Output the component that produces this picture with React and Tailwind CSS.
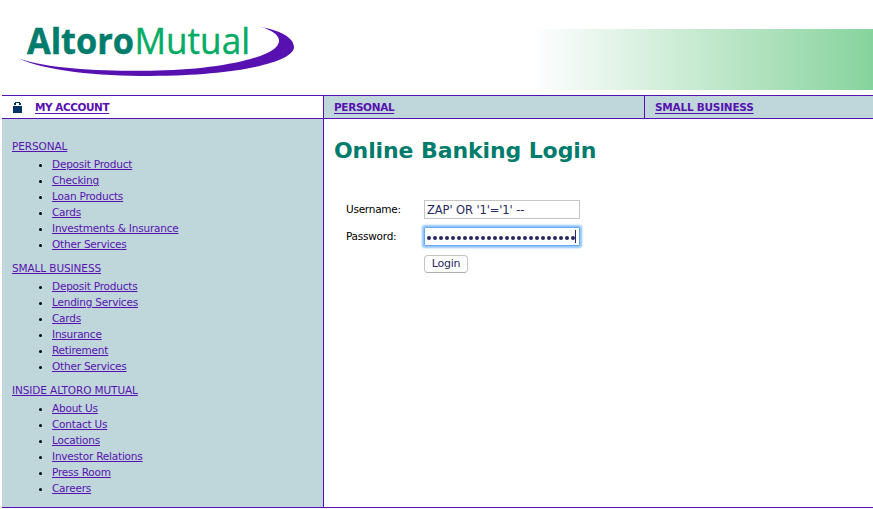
const sections = [
  {
    title: 'PERSONAL',
    items: ['Deposit Product', 'Checking', 'Loan Products', 'Cards', 'Investments & Insurance', 'Other Services'],
  },
  {
    title: 'SMALL BUSINESS',
    items: ['Deposit Products', 'Lending Services', 'Cards', 'Insurance', 'Retirement', 'Other Services'],
  },
  {
    title: 'INSIDE ALTORO MUTUAL',
    items: ['About Us', 'Contact Us', 'Locations', 'Investor Relations', 'Press Room', 'Careers'],
  },
];

function Logo() {
  return (
    <svg className="ml-3 mt-2.5 h-[70px] w-[290px] shrink-0" viewBox="12 10 290 70">
      <path
        d="M18 58.2 C50 69 100 71.2 150 70.8 C205 70.5 257 61.5 274 49 C284 41 279 32 260 26.8 C279 30 294 37.5 294 47 C294 62 237 75.8 151 75.9 C96 75.9 47 71 18 58.2Z"
        fill="#5811b1"
      />
      <text x="27" y="53.5" textLength="107" lengthAdjust="spacingAndGlyphs" fontFamily="'Open Sans', 'Noto Sans', sans-serif" fontSize="36" fontWeight="700" fill="#007c6c" stroke="#007c6c" strokeWidth="0.5">Altoro</text>
      <text x="134.5" y="53.5" textLength="115.5" lengthAdjust="spacingAndGlyphs" fontFamily="'Open Sans', 'Noto Sans', sans-serif" fontSize="36" fontWeight="400" fill="#00ab63" stroke="#00ab63" strokeWidth="0.4">Mutual</text>
    </svg>
  );
}

function Lock() {
  return (
    <svg className="h-3 w-[9px]" viewBox="0 0 9 12" shapeRendering="crispEdges" fill="#003366">
      <path d="M2 1h5v1h1v2H6V2H3v2H1V2h1z M0 5h9v7H0z" />
    </svg>
  );
}

function NavLink({ children, className }) {
  return (
    <a className={`text-[10.5px] leading-[22px] font-bold underline decoration-1 underline-offset-2 ${className}`}>{children}</a>
  );
}

export default function App() {
  return (
    <div className="flex h-[509px] w-[873px] flex-col overflow-hidden bg-white pl-0.5 font-['DejaVu_Sans',sans-serif] text-[#5811b1]">
      <header className="-ml-0.5 flex h-[95px] shrink-0 justify-between">
        <Logo />
        <div className="mt-[29px] h-[61px] w-[336px] bg-linear-to-r from-[#fdfdff] via-[#c4e9ce] via-50% to-[#86d39d]" />
      </header>
      <nav className="flex h-6 shrink-0 border-y border-[#5811b1]">
        <div className="flex w-[322px] items-center border-r border-[#5811b1] pl-[11px]">
          <Lock />
          <span className="ml-[13px] flex"><NavLink className="tracking-[-0.45px]">MY ACCOUNT</NavLink></span>
        </div>
        <div className="flex w-[321px] border-r border-[#5811b1] bg-[#bfd7da] pl-2.5"><NavLink className="tracking-[-0.35px]">PERSONAL</NavLink></div>
        <div className="flex flex-1 bg-[#bfd7da] pl-2.5"><NavLink className="tracking-[-0.23px]">SMALL BUSINESS</NavLink></div>
      </nav>
      <div className="flex h-[389px] shrink-0 border-b border-[#5811b1]">
        <aside className="w-[322px] border-r border-[#5811b1] bg-[#bfd7da] pt-[19px] pl-2.5 text-[10.5px] leading-4">
          {sections.map((s) => (
            <section key={s.title} className="mb-2">
              <a className="mb-0.5 block tracking-[-0.1px] underline decoration-1 underline-offset-1">{s.title}</a>
              <ul>
                {s.items.map((item) => (
                  <li key={item} className="flex h-4 items-center">
                    <span className="mt-[3px] mr-2.5 ml-[27px] size-[3px] rounded-full bg-black" />
                    <a className="tracking-[-0.21px] underline decoration-1 underline-offset-1">{item}</a>
                  </li>
                ))}
              </ul>
            </section>
          ))}
        </aside>
        <main className="flex-1 pl-2.5">
          <h1 className="mt-[17px] text-[22px] leading-[30px] font-bold tracking-[-0.1px] whitespace-nowrap text-[#007c6c]">Online Banking Login</h1>
          <form className="mt-[34px] ml-3 grid grid-cols-[78px_157px] text-[10.5px] tracking-[-0.25px] text-black">
            <label className="leading-[19px]">Username:</label>
            <div className="h-[19px] w-[156px] border border-[#c5c5c5] pl-0.5 text-[11.5px] leading-[18px] tracking-[-0.1px] whitespace-pre text-[#29295f]">{"ZAP' OR '1'='1' --"}</div>
            <label className="mt-2 leading-[19px]">Password:</label>
            <div className="mt-2 flex h-[19px] w-[156px] items-center gap-[2px] rounded-[1px] border border-[#68a8ef] pl-0.5 shadow-[0_0_2px_2px_#8fc4fa]">
              {Array.from({ length: 25 }, (_, i) => (
                <i key={i} className="mt-0.5 size-1 shrink-0 rounded-full bg-[#29295f]" />
              ))}
              <i className="-ml-0.5 h-[13px] w-px shrink-0 bg-[#29295f]" />
            </div>
            <div className="col-start-2 mt-[9px] h-[18px] w-11 rounded-[4px] border border-[#c5c5c5] border-b-[#adadad] text-center text-[11px] leading-4 tracking-[-0.2px] text-[#29295f]">Login</div>
          </form>
        </main>
      </div>
    </div>
  );
}
